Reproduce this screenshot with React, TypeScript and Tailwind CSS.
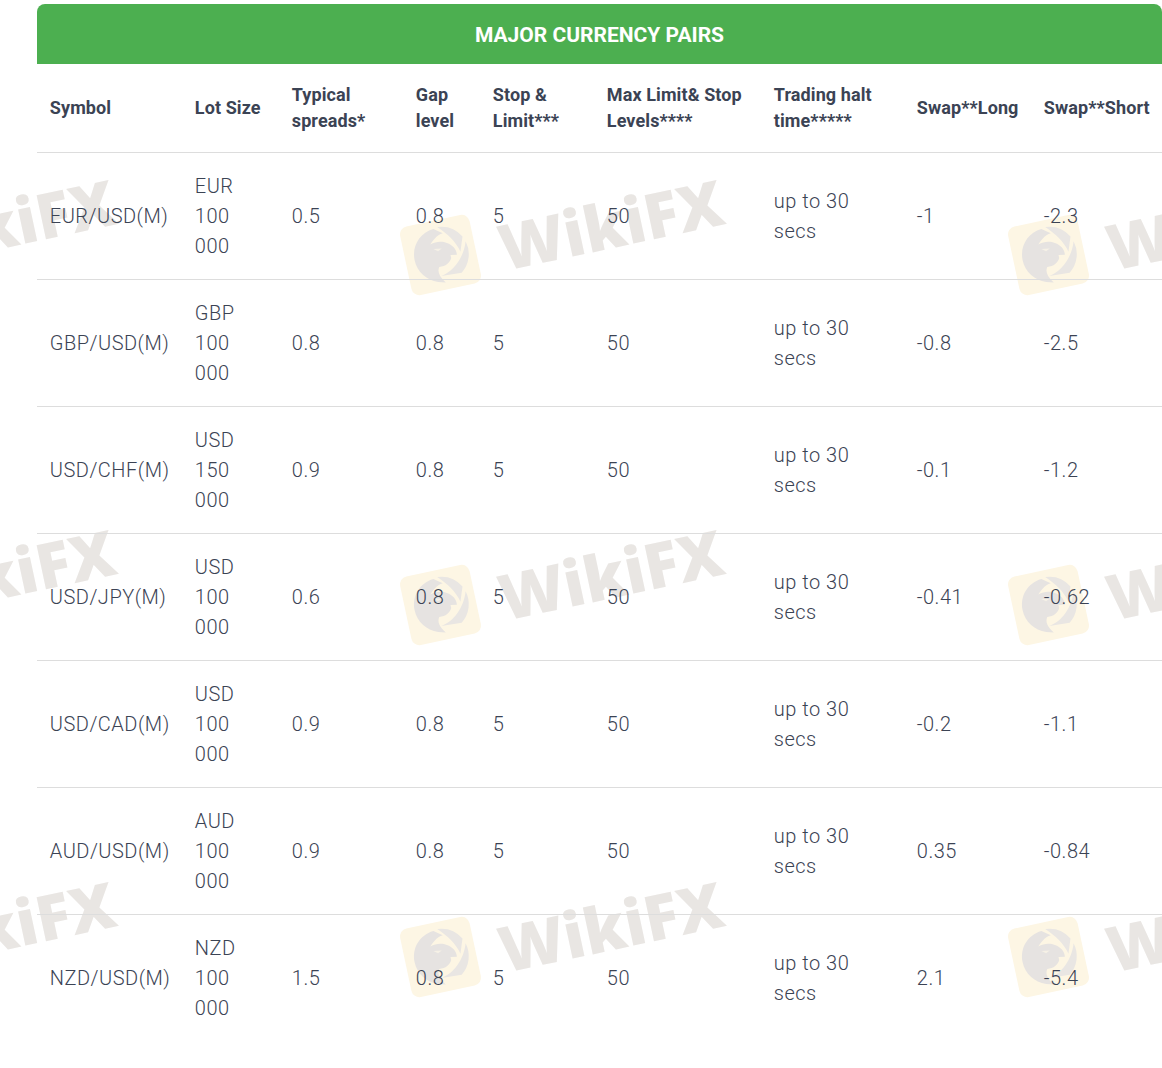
const rows = [
  ['EUR/USD(M)', 'EUR', '100', '0.5', '-1', '-2.3'],
  ['GBP/USD(M)', 'GBP', '100', '0.8', '-0.8', '-2.5'],
  ['USD/CHF(M)', 'USD', '150', '0.9', '-0.1', '-1.2'],
  ['USD/JPY(M)', 'USD', '100', '0.6', '-0.41', '-0.62'],
  ['USD/CAD(M)', 'USD', '100', '0.9', '-0.2', '-1.1'],
  ['AUD/USD(M)', 'AUD', '100', '0.9', '0.35', '-0.84'],
  ['NZD/USD(M)', 'NZD', '100', '1.5', '2.1', '-5.4'],
]

const heads = [
  { label: 'Symbol', width: 'w-[145px]' },
  { label: 'Lot Size', width: 'w-[97px]' },
  { label: 'Typical spreads*', width: 'w-[124px]' },
  { label: 'Gap level', width: 'w-[77px]' },
  { label: 'Stop & Limit***', width: 'w-[114px]' },
  { label: 'Max Limit& Stop Levels****', width: 'w-[167px]' },
  { label: 'Trading halt time*****', width: 'w-[143px]' },
  { label: 'Swap**Long', width: 'w-[127px]' },
  { label: 'Swap**Short', width: 'w-[131px]' },
]

function Eagle() {
  return (
    <svg viewBox="0 0 56 56" className="h-[58px] w-[58px]">
      {/* ring blades */}
      <path d="M30 1 A27 27 0 0 1 52 15 L47 29 C45 19 38 9 30 1 Z" fill="#e9e6e3" />
      <path d="M54 20 A27 27 0 0 1 44 49 L24 48 C37 46 49 35 54 20 Z" fill="#e9e6e3" />
      {/* head */}
      <path
        d="M26 2 C12 3 2 14 2 28 C2 39 9 49 20 53 L27 55 C22 48 21 43 24 39 C30 40 35 37 37 33 L37 30 L43 31 C44 26 41 21 36 18 C32 15 26 14 20 16 C25 11 30 8 34 8 Z"
        fill="#e6e3e1"
      />
      <path d="M22 21 L30 22 L26 24 Z" fill="#f6f1e6" />
    </svg>
  )
}

function Watermark() {
  return (
    <div className="flex items-start">
      <div className="mt-[45px] flex h-[70px] w-[71px] shrink-0 rotate-[-12deg] items-center justify-center rounded-[8px] bg-[#fdf6e4]">
        <Eagle />
      </div>
      <span className="mt-[17px] ml-[21px] shrink-0 rotate-[-12deg] font-['Open_Sans',sans-serif] text-[63px] leading-none font-extrabold text-[#e9e6e3]">
        WikiFX
      </span>
    </div>
  )
}

export default function App() {
  return (
    <div className="relative h-[1068px] w-[1162px] overflow-hidden bg-white font-['Roboto',sans-serif]">
      {/* watermarks sit under the table text */}
      <div className="absolute top-[175px] left-[-203px] grid grid-cols-[608px_608px_608px] grid-rows-[350px_352px_auto]">
        {Array.from({ length: 9 }, (_, i) => (
          <Watermark key={i} />
        ))}
      </div>

      <div className="relative ml-[37px] w-[1125px] pt-[4px]">
        <div className="flex h-[60px] items-center justify-center rounded-t-[8px] bg-[#4caf50] pt-[3px] text-[21px] font-bold text-white">
          MAJOR CURRENCY PAIRS
        </div>
        <table className="w-[1125px] table-fixed border-collapse text-[20px] leading-[30px] font-light tracking-[0.5px] text-[#3b4354]">
          <thead>
            <tr className="h-[88px] border-b border-[#dddddd]">
              {heads.map((h) => (
                <th
                  key={h.label}
                  className={`${h.width} pr-3 pl-[12.8px] text-left text-[18px] leading-[26px] font-bold tracking-[0.1px]`}
                >
                  {h.label}
                </th>
              ))}
            </tr>
          </thead>
          <tbody>
            {rows.map((r) => (
              <tr key={r[0]} className="h-[127px] border-b border-[#dddddd] last:border-b-0">
                <td className="pl-[12.8px]">{r[0]}</td>
                <td className="pl-[12.8px]">
                  {r[1]}
                  <br />
                  {r[2]}
                  <br />
                  000
                </td>
                <td className="pl-[12.8px]">{r[3]}</td>
                <td className="pl-[12.8px]">0.8</td>
                <td className="pl-[12.8px]">5</td>
                <td className="pl-[12.8px]">50</td>
                <td className="pl-[12.8px]">
                  up to 30
                  <br />
                  secs
                </td>
                <td className="pl-[12.8px]">{r[4]}</td>
                <td className="pl-[12.8px]">{r[5]}</td>
              </tr>
            ))}
          </tbody>
        </table>
      </div>
    </div>
  )
}
